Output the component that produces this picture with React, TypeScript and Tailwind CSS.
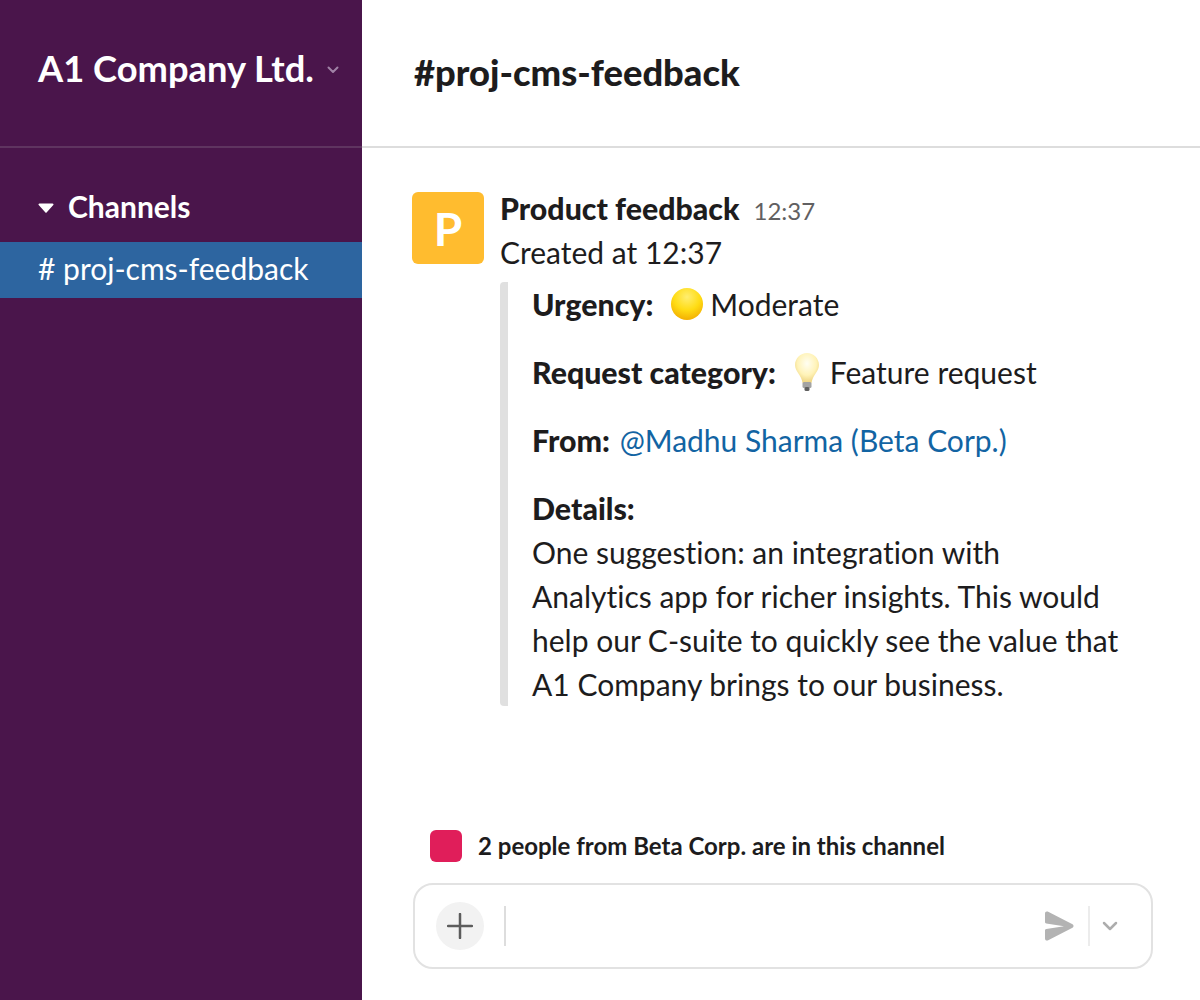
export default function App() {
  const font = { fontFamily: '"Lato", "Liberation Sans", sans-serif' };
  return (
    <div style={font} className="flex h-[1000px] w-[1200px] overflow-hidden bg-white text-[#1d1c1d] [font-variant-ligatures:none]">
      <aside className="flex w-[362px] shrink-0 flex-col bg-[#4a154b] text-white">
        <div className="flex h-[148px] items-center border-b-2 border-[#5f3460] pb-[10px] pl-[38px]">
          <span className="text-[36.300px] font-bold leading-none">A1 Company Ltd.</span>
          <svg className="ml-[13px] mt-[3px]" width="12" height="8" viewBox="0 0 12 8" fill="none">
            <path d="M1.500 1.500 6 6l4.500-4.500" stroke="#a082a6" strokeWidth="2" strokeLinecap="round" strokeLinejoin="round" />
          </svg>
        </div>
        <div className="flex h-[94px] items-end pb-[18px] pl-[38px]">
          <svg width="16" height="10" viewBox="0 0 16 10" className="mb-[11px]">
            <path d="M1.500 0.500h13a1 1 0 0 1 .8 1.600L8.800 9.200a1 1 0 0 1-1.600 0L.7 2.100a1 1 0 0 1 .8-1.600z" fill="#fff" />
          </svg>
          <span className="ml-[14px] text-[30px] font-bold leading-[36px]">Channels</span>
        </div>
        <div className="flex h-[56px] items-center bg-[#2d65a0] pb-[4px] pl-[38px] text-[30px] leading-none">
          # proj-cms-feedback
        </div>
      </aside>
      <main className="flex min-w-0 flex-1 flex-col">
        <header className="flex h-[148px] items-center border-b-2 border-[#dddddd] pb-[2px] pl-[52px]">
          <h1 className="text-[36.300px] font-black leading-none">#proj-cms-feedback</h1>
        </header>
        <section className="flex flex-1 flex-col pl-[50px]">
          <div className="mt-[42px] flex">
            <div className="mt-[2px] flex h-[72px] w-[72px] shrink-0 items-center justify-center rounded-[6px] bg-[#ffbc2f] text-[46px] font-bold text-white">
              P
            </div>
            <div className="ml-[16px] min-w-0">
              <div className="flex h-[36px] items-baseline">
                <span className="text-[30.300px] font-black leading-[36px]">Product feedback</span>
                <span className="ml-[14px] text-[24px] text-[#616061]">12:37</span>
              </div>
              <p className="mt-[4px] text-[30px] leading-[44px]">Created at 12:37</p>
              <div className="mt-[8px] w-[640px] rounded-[4px] border-l-[8px] border-[#e0e0e0] pl-[24px] text-[30px] leading-[44px]">
                <p className="flex items-center">
                  <b className="text-[30.300px] font-black">Urgency:</b>
                  <svg className="ml-[17px] mr-[6px]" width="34" height="34" viewBox="0 0 34 34">
                    <defs>
                      <radialGradient id="moon" cx="50%" cy="28%" r="75%">
                        <stop offset="0%" stopColor="#ffee70" />
                        <stop offset="55%" stopColor="#ffdc14" />
                        <stop offset="100%" stopColor="#f2ab00" />
                      </radialGradient>
                    </defs>
                    <circle cx="17" cy="17" r="16" fill="url(#moon)" />
                  </svg>
                  <span>Moderate</span>
                </p>
                <p className="mt-[24px] flex items-center">
                  <b className="text-[30.300px] font-black">Request category:</b>
                  <svg className="ml-[16px] mr-[8px]" width="30" height="40" viewBox="0 0 30 40">
                    <defs>
                      <radialGradient id="bulb" cx="50%" cy="35%" r="60%">
                        <stop offset="0%" stopColor="#fffef2" />
                        <stop offset="65%" stopColor="#fff3b8" />
                        <stop offset="100%" stopColor="#f0d888" />
                      </radialGradient>
                    </defs>
                    <path d="M15 1C8.500 1 3 6.500 3 13c0 6.500 6.500 10 7.500 18h9c1-8 7.500-11.500 7.500-18 0-6.500-5.500-12-12-12z" fill="url(#bulb)" />
                    <rect x="10.500" y="30" width="9" height="6" rx="1.500" fill="#a3a3a3" />
                    <rect x="12.500" y="35" width="5" height="4" rx="1.500" fill="#5f5f5f" />
                  </svg>
                  <span>Feature request</span>
                </p>
                <p className="mt-[24px]">
                  <b className="text-[30.300px] font-black">From:</b> <span className="ml-[2px] text-[#1264a3]">@Madhu Sharma (Beta Corp.)</span>
                </p>
                <p className="mt-[24px] text-[30.300px] font-black">Details:</p>
                <p>One suggestion: an integration with</p>
                <p>Analytics app for richer insights. This would</p>
                <p>help our C-suite to quickly see the value that</p>
                <p>A1 Company brings to our business.</p>
              </div>
            </div>
          </div>
          <div className="mt-auto flex items-center pl-[18px]">
            <div className="h-[32px] w-[32px] rounded-[6px] bg-[#e01e5a]" />
            <span className="ml-[16px] text-[24px] font-bold">2 people from Beta Corp. are in this channel</span>
          </div>
          <div className="mb-[31px] ml-[1px] mt-[19px] flex h-[86px] w-[740px] items-center rounded-[20px] border-2 border-[#e2e2e2] pl-[21px] pr-[33px]">
            <div className="flex h-[48px] w-[48px] items-center justify-center rounded-full bg-[#f2f2f2]">
              <svg width="26" height="26" viewBox="0 0 26 26">
                <path d="M13 1v24M1 13h24" stroke="#5c5c5c" strokeWidth="2.500" strokeLinecap="round" />
              </svg>
            </div>
            <div className="ml-[20px] h-[40px] w-[2px] bg-[#dddddd]" />
            <svg className="ml-auto" width="30" height="32" viewBox="0 0 30 32">
              <path d="M1 3.500c0-1.600 1.200-2.500 2.700-1.900L28.500 14.300c1.400.7 1.400 2.700 0 3.400L3.700 30.400C2.200 31 1 30.100 1 28.500v-8c0-.8.500-1.300 1.300-1.400L20 16.200 2.300 13.400C1.500 13.300 1 12.800 1 12z" fill="#b3b3b3" />
            </svg>
            <div className="ml-[14px] h-[40px] w-[2px] bg-[#ececec]" />
            <svg className="ml-[12px]" width="16" height="10" viewBox="0 0 16 10" fill="none">
              <path d="M2 2l6 6 6-6" stroke="#adadad" strokeWidth="2.500" strokeLinecap="round" strokeLinejoin="round" />
            </svg>
          </div>
        </section>
      </main>
    </div>
  );
}
